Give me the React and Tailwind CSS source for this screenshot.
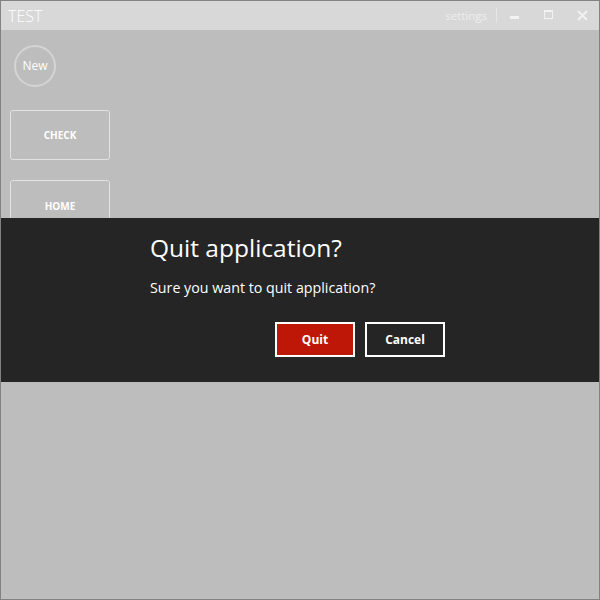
import React from "react";

export default function App() {
  const font = { fontFamily: '"Open Sans", "Noto Sans", sans-serif' };
  return (
    <div className="relative w-[600px] h-[600px] border border-[#828282] bg-[#bdbdbd] flex flex-col overflow-hidden" style={font}>
      {/* Title bar */}
      <div className="h-[29px] bg-[#d8d8d8] flex items-center shrink-0">
        <div className="pl-[7px] text-[16px] font-light text-white leading-none">TEST</div>
        <div className="ml-auto flex items-center h-full">
          <span className="text-[11.5px] text-[#eeeeee] leading-none mr-[9px]">settings</span>
          <div className="w-px h-[15px] bg-[#e6e6e6]" />
          <div className="w-[34px] h-full flex items-center justify-center">
            <div className="w-[9px] h-[3px] bg-[#f2f2f2] mt-[4px]" />
          </div>
          <div className="w-[34px] h-full flex items-center justify-center">
            <div className="w-[9px] h-[9px] border border-[#f2f2f2] border-t-[2px] -mt-[3px]" />
          </div>
          <div className="w-[34px] h-full flex items-center justify-center">
            <svg width="11" height="11" viewBox="0 0 11 11" className="-mt-[1px]">
              <path d="M1 1 L10 10 M10 1 L1 10" stroke="#f2f2f2" strokeWidth="1.8" />
            </svg>
          </div>
        </div>
      </div>

      {/* Content */}
      <div className="flex-1 flex flex-col items-start pl-[9px] pt-[15px]">
        <div className="ml-[4px] w-[42px] h-[42px] rounded-full border-2 border-[#d4d4d4] flex items-center justify-center text-[12px] text-white">
          New
        </div>
        <div className="mt-[23px] w-[100px] h-[50px] rounded-[3px] border border-[#e2e2e2] flex items-center justify-center text-[10px] font-bold text-white">
          CHECK
        </div>
        <div className="mt-[20px] w-[100px] h-[50px] rounded-[3px] border border-[#e2e2e2] flex items-center justify-center pt-[2px] text-[10px] font-bold text-white">
          HOME
        </div>
      </div>

      {/* Dialog overlay band */}
      <div className="absolute left-0 right-0 top-[217px] h-[164px] bg-[#252525] pl-[149px] pr-[154px] pt-[14px]">
        <div className="text-[24.5px] text-white leading-[32px]">Quit application?</div>
        <div className="mt-[14px] text-[14.25px] text-white leading-[20px]">Sure you want to quit application?</div>
        <div className="mt-[24px] flex justify-end gap-[10px]">
          <button className="w-[80px] h-[35px] bg-[#be1707] border-2 border-white text-white text-[12px] font-bold">Quit</button>
          <button className="w-[80px] h-[35px] bg-[#252525] border-2 border-white text-white text-[12px] font-bold">Cancel</button>
        </div>
      </div>
    </div>
  );
}
